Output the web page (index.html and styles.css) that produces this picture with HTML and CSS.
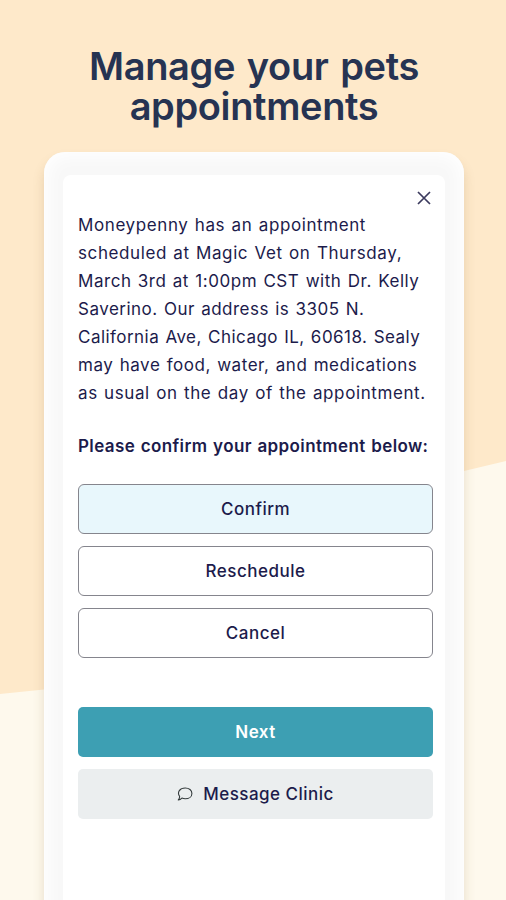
FILE: index.html
```html
<!DOCTYPE html>
<html lang="en">
<head>
<meta charset="utf-8">
<title>Manage your pets appointments</title>
<link rel="stylesheet" href="styles.css">
</head>
<body>
<main class="page">
  <svg class="backdrop" viewBox="0 0 506 900" aria-hidden="true"><path d="M0 694L44 689.500C170 660 340 505 464 471L506 461V900H0Z" fill="#fef9ed"/></svg>
  <h1 class="title"><span class="t1">Manage your pets</span><span class="t2">appointments</span></h1>
  <section class="device">
    <div class="screen">
      <button class="close" aria-label="Close"><svg viewBox="0 0 14 14"><path d="M1 1L13 13M13 1L1 13"/></svg></button>
      <p class="details">
        <span class="l1">Moneypenny has an appointment</span>
        <span class="l2">scheduled at Magic Vet on Thursday,</span>
        <span class="l3">March 3rd at 1:00pm CST with Dr. Kelly</span>
        <span class="l4">Saverino. Our address is 3305 N.</span>
        <span class="l5">California Ave, Chicago IL, 60618. Sealy</span>
        <span class="l6">may have food, water, and medications</span>
        <span class="l7">as usual on the day of the appointment.</span>
      </p>
      <p class="prompt">Please confirm your appointment below:</p>
      <div class="options">
        <button class="btn selected">Confirm</button>
        <button class="btn">Reschedule</button>
        <button class="btn">Cancel</button>
      </div>
      <div class="actions">
        <button class="btn next">Next</button>
        <button class="btn message"><svg class="bubble" viewBox="0 0 16 14"><path d="M2.600 9.300C-.2 5.200 2.800 1 8.200 1C12.100 1 14.900 3.300 14.900 6.400C14.900 9.600 12 11.800 8.200 11.800C6.900 11.800 5.800 11.500 4.900 11.100C3.800 12.200 2.600 12.800 1.300 12.900C2.200 11.900 2.700 10.700 2.600 9.300Z"/></svg>Message Clinic</button>
      </div>
    </div>
  </section>
</main>
</body>
</html>
```

FILE: styles.css
```css
* { box-sizing: border-box; }
body { margin: 0; font-family: Inter, "Liberation Sans", sans-serif; color: #1c1b4b; }
.page { position: relative; width: 506px; height: 900px; overflow: hidden; background: #fee9ca; display: flex; flex-direction: column; align-items: center; padding-left: 2px; }
.backdrop { position: absolute; inset: 0; width: 506px; height: 900px; }
.title { position: relative; margin: 47px 0 0; font-size: 38px; line-height: 39.5px; font-weight: 600; color: #263352; text-align: center; white-space: nowrap; }
.title span { display: block; }
.t1 { letter-spacing: -.35px; word-spacing: 2.500px; }
.t2 { letter-spacing: -.35px; }
.device { position: relative; width: 420px; height: 800px; flex: none; margin-top: 26px; padding: 23px 19px 0; border-radius: 21px 21px 0 0; background: #f8f8f8; box-shadow: 0 8px 12px rgba(120, 90, 40, .18), inset 0 0 18px 4px #fff; }
.screen { height: 100%; padding: 12px 13px 0 15px; border-radius: 8px 8px 0 0; background: #fff; display: flex; flex-direction: column; }
button { font: inherit; color: inherit; border: 0; padding: 0; background: none; }
.close { align-self: flex-end; width: 16px; height: 22px; display: flex; align-items: center; justify-content: center; }
.close svg { width: 14px; height: 14px; stroke: #3b3a5e; stroke-width: 1.7; fill: none; }
.details { margin: 2px 0 0; font-size: 17px; line-height: 28px; word-spacing: 1px; white-space: nowrap; }
.details span { display: block; }
.l1, .l2, .l7 { letter-spacing: .6px; }
.l3, .l6 { letter-spacing: .54px; }
.l4 { letter-spacing: .49px; }
.l5 { letter-spacing: .46px; }
.prompt { margin: 25px 0 0; font-size: 17px; line-height: 28px; font-weight: 600; letter-spacing: .38px; word-spacing: 1px; white-space: nowrap; }
.options, .actions { display: grid; gap: 12px; }
.options { margin-top: 24px; }
.actions { margin-top: 49px; gap: 12px; }
.btn { width: 355px; height: 50px; border: 1px solid #85858d; border-radius: 6px; background: #fff; font-size: 17px; font-weight: 500; letter-spacing: .48px; display: flex; align-items: center; justify-content: center; }
.selected { background: #e8f7fc; }
.next, .message { height: 50px; border: 0; border-radius: 5px; }
.next { background: #3d9fb3; color: #fff; font-weight: 600; }
.message { background: #ebeeef; gap: 10px; }
.bubble { width: 16px; height: 14px; fill: none; stroke: #353c3d; stroke-width: 1.1; stroke-linejoin: round; }
```
